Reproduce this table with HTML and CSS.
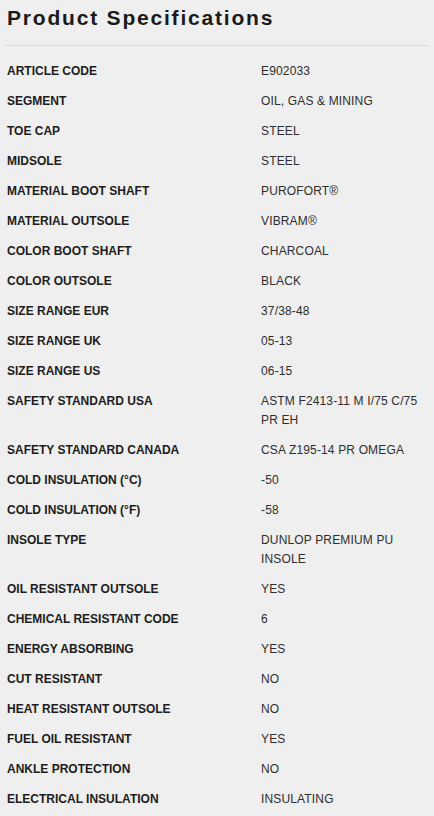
FILE: index.html
```html
<!DOCTYPE html>
<html lang="en">
<head>
<meta charset="utf-8">
<link rel="stylesheet" href="styles.css">
</head>
<body>
<section class="specs">
  <h2 class="specs-title">Product Specifications</h2>
  <dl class="specs-list">
    <div class="row"><dt>ARTICLE CODE</dt><dd>E902033</dd></div>
    <div class="row"><dt>SEGMENT</dt><dd>OIL, GAS &amp; MINING</dd></div>
    <div class="row"><dt>TOE CAP</dt><dd>STEEL</dd></div>
    <div class="row"><dt>MIDSOLE</dt><dd>STEEL</dd></div>
    <div class="row"><dt>MATERIAL BOOT SHAFT</dt><dd>PUROFORT®</dd></div>
    <div class="row"><dt>MATERIAL OUTSOLE</dt><dd>VIBRAM®</dd></div>
    <div class="row"><dt>COLOR BOOT SHAFT</dt><dd>CHARCOAL</dd></div>
    <div class="row"><dt>COLOR OUTSOLE</dt><dd>BLACK</dd></div>
    <div class="row"><dt>SIZE RANGE EUR</dt><dd>37/38-48</dd></div>
    <div class="row"><dt>SIZE RANGE UK</dt><dd>05-13</dd></div>
    <div class="row"><dt>SIZE RANGE US</dt><dd>06-15</dd></div>
    <div class="row"><dt>SAFETY STANDARD USA</dt><dd>ASTM F2413-11 M I/75 C/75 PR EH</dd></div>
    <div class="row"><dt>SAFETY STANDARD CANADA</dt><dd>CSA Z195-14 PR OMEGA</dd></div>
    <div class="row"><dt>COLD INSULATION (°C)</dt><dd>-50</dd></div>
    <div class="row"><dt>COLD INSULATION (°F)</dt><dd>-58</dd></div>
    <div class="row"><dt>INSOLE TYPE</dt><dd>DUNLOP PREMIUM PU INSOLE</dd></div>
    <div class="row"><dt>OIL RESISTANT OUTSOLE</dt><dd>YES</dd></div>
    <div class="row"><dt>CHEMICAL RESISTANT CODE</dt><dd>6</dd></div>
    <div class="row"><dt>ENERGY ABSORBING</dt><dd>YES</dd></div>
    <div class="row"><dt>CUT RESISTANT</dt><dd>NO</dd></div>
    <div class="row"><dt>HEAT RESISTANT OUTSOLE</dt><dd>NO</dd></div>
    <div class="row"><dt>FUEL OIL RESISTANT</dt><dd>YES</dd></div>
    <div class="row"><dt>ANKLE PROTECTION</dt><dd>NO</dd></div>
    <div class="row"><dt>ELECTRICAL INSULATION</dt><dd>INSULATING</dd></div>
  </dl>
</section>
</body>
</html>
```
FILE: styles.css
```css
html, body {
  margin: 0;
  padding: 0;
  background: #efefef;
}
body {
  font-family: "Liberation Sans", Arial, sans-serif;
  color: #1b1b1b;
  overflow: hidden;
}
.specs {
  padding: 0 5px 0 5px;
}
.specs-title {
  margin: 0;
  padding: 5px 2px 0;
  height: 46px;
  box-sizing: border-box;
  font-size: 21px;
  line-height: 26px;
  font-weight: bold;
  letter-spacing: 1.8px;
  color: #1a1a1a;
  border-bottom: 1px solid #d9d9d9;
}
.specs-list {
  margin: 10px 0 0;
  padding: 0 2px;
}
.row {
  display: grid;
  grid-template-columns: 254px 1fr;
  padding: 5.5px 0;
  font-size: 12px;
  line-height: 19px;
}
.row dt {
  font-weight: bold;
  letter-spacing: 0;
  color: #1c1c1c;
}
.row dd {
  margin: 0;
  letter-spacing: 0.15px;
  color: #2e2e2e;
}
```
